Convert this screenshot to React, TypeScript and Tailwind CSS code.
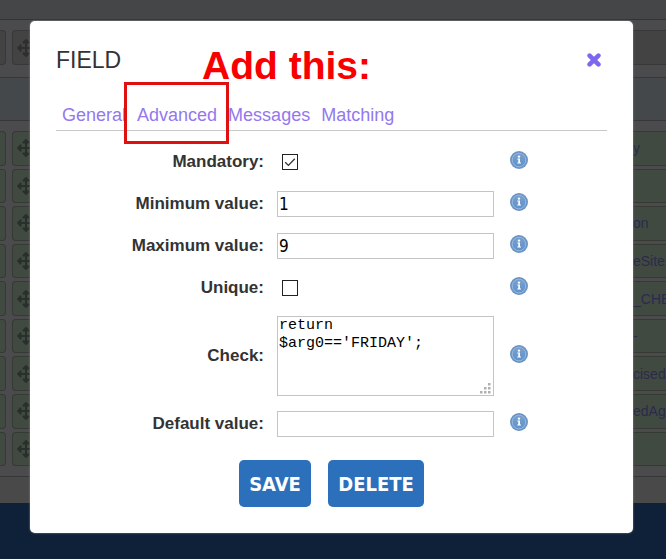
import type { ReactNode } from "react"
import { FaArrowsAlt } from "react-icons/fa"

const tabs = ["General", "Advanced", "Messages", "Matching"]

const attributes = ["y", "", "on", "eSites", "_CHE", "-", "cised", "edAge", ""]

function InfoIcon() {
  return (
    <svg viewBox="0 0 18 18" className="w-[18px] h-[18px]" aria-hidden="true">
      <defs>
        <linearGradient id="infoFill" x1="0" y1="0" x2="0" y2="1">
          <stop offset="0" stopColor="#7a9fca" />
          <stop offset="1" stopColor="#5c93d0" />
        </linearGradient>
      </defs>
      <circle cx="9" cy="9" r="9" fill="#6b94c4" />
      <circle cx="9" cy="9" r="6.8" fill="url(#infoFill)" stroke="#9bbbe0" strokeWidth="0.9" />
      <circle cx="9" cy="5.6" r="1.2" fill="#fff" />
      <path d="M7.3 7.5h2.7v4h1v1.1H7.3v-1.1h1V8.6h-1z" fill="#fff" />
    </svg>
  )
}

function FieldRow({ id, label, tall, children }: { id: string; label: string; tall?: boolean; children: ReactNode }) {
  return (
    <div className={`grid grid-cols-[208px_217px_18px] items-center ${tall ? "h-[94px]" : "h-[42px]"}`}>
      <label htmlFor={id} className="text-right text-[17px] leading-6 font-bold text-[#333]">
        {label}
      </label>
      <div className="ml-[13px] w-[217px]">{children}</div>
      <button type="button" aria-label={`Help for ${label}`} className="ml-[29px] mb-1 w-[18px] h-[18px]">
        <InfoIcon />
      </button>
    </div>
  )
}

function CheckBox({ id, checked }: { id: string; checked?: boolean }) {
  return (
    <div className="grid w-4 h-4 ml-[5px]">
      <input
        id={id}
        type="checkbox"
        defaultChecked={checked}
        className="peer col-start-1 row-start-1 appearance-none w-4 h-4 border border-[#222] bg-white"
      />
      <svg
        viewBox="0 0 16 16"
        className="col-start-1 row-start-1 w-4 h-4 pointer-events-none invisible peer-checked:visible"
      >
        <path d="M3.2 8.2l3.2 3.2 6.4-6.6" fill="none" stroke="#333" strokeWidth="1.3" />
      </svg>
    </div>
  )
}

const inputClass =
  "block w-full h-[26px] border border-[#c4c4c4] bg-white px-px text-[17px] text-black font-['DejaVu_Sans_Condensed','DejaVu_Sans',sans-serif]"

const buttonClass =
  "h-[47px] rounded-[5px] bg-[#2c6fba] text-xl font-bold text-white font-['DejaVu_Sans_Condensed','DejaVu_Sans',sans-serif]"

// Dimmed attribute list behind the dialog
function Backdrop() {
  return (
    <div className="flex flex-col min-h-screen bg-[#4b4a4c]" aria-hidden="true">
      <div className="h-5 bg-[#454648] border-b border-[#333]" />
      <div className="flex gap-[6px] mt-[10px] h-[35px]">
        <div className="w-[6px] rounded-r-[4px] border border-l-0 border-[#383838] bg-[#434343]" />
        <div className="flex-1 flex items-center pl-1 rounded-l-[4px] border border-r-0 border-[#383838] bg-[#434343] text-[#2c2e30]">
          <FaArrowsAlt size={18} />
        </div>
      </div>
      <div className="mt-3 h-11 border-y border-[#363738] bg-[#45484b]" />
      <div className="mt-[10px] flex flex-col gap-[3px] h-[335px]">
        {attributes.map((name, index) => (
          <div key={index} className="flex flex-1 gap-[6px]">
            <div className="w-[6px] rounded-r-[4px] border border-l-0 border-[#353a35] bg-[#414a40]" />
            <div className="flex-1 flex items-center justify-between pl-1 rounded-l-[4px] border border-r-0 border-[#353a35] bg-[#414a40] text-[#29302b]">
              <FaArrowsAlt size={18} />
              <span className="w-[33px] text-sm text-[#2b2a4c]">{name}</span>
            </div>
          </div>
        ))}
      </div>
      <div className="mt-[10px] h-[27px] border-t border-[#363638] bg-[#49494a]" />
      <div className="flex-1 bg-[#0e2139]" />
    </div>
  )
}

export default function App() {
  return (
    <div className="relative overflow-hidden font-['Liberation_Sans',Arial,sans-serif]">
      <Backdrop />

      <div className="absolute inset-x-0 top-0 pt-[21px] pl-[30px] pr-[33px]">
        <div
          role="dialog"
          aria-label="Field"
          className="relative rounded-[5px] bg-white px-[26px] pt-[22px] pb-[26px] shadow-[0_0_2px_0_#999]"
        >
          <div className="flex items-center justify-between h-[34px]">
            <h1 className="text-[23px] leading-7 text-[#333]">FIELD</h1>
            <button type="button" aria-label="Close" className="mr-[6px]">
              <svg viewBox="0 0 14 14" className="w-[14px] h-[14px]">
                <path d="M2.6 2.6l8.8 8.8M11.4 2.6l-8.8 8.8" stroke="#7b68ee" strokeWidth="4.6" strokeLinecap="round" />
              </svg>
            </button>
          </div>

          <nav className="mt-[22px] flex items-center gap-[11px] h-8 pl-[6px] border-b border-[#c8c8c8]">
            {tabs.map((tab) => (
              <a key={tab} href="#" className="text-lg leading-6 text-[#9378ee]">
                {tab}
              </a>
            ))}
          </nav>

          <form className="mt-[10px]">
            <FieldRow id="mandatory" label="Mandatory:">
              <CheckBox id="mandatory" checked />
            </FieldRow>
            <FieldRow id="min" label="Minimum value:">
              <input id="min" type="text" defaultValue="1" className={inputClass} />
            </FieldRow>
            <FieldRow id="max" label="Maximum value:">
              <input id="max" type="text" defaultValue="9" className={inputClass} />
            </FieldRow>
            <FieldRow id="unique" label="Unique:">
              <CheckBox id="unique" />
            </FieldRow>
            <FieldRow id="check" label="Check:" tall>
              <div className="relative">
                <textarea
                  id="check"
                  defaultValue={"return\n$arg0=='FRIDAY';"}
                  className="block w-full h-20 resize-none border border-[#c4c4c4] bg-white px-px py-0 text-[15px] leading-[18px] text-black font-['Liberation_Mono','Courier_New',monospace]"
                />
                <svg viewBox="0 0 12 12" className="absolute right-[3px] bottom-[2px] w-3 h-3" fill="#b0b0b0">
                  <path d="M9 1h2.5v2.5H9zM9 5h2.5v2.5H9zM5 5h2.5v2.5H5zM9 9h2.5v2.5H9zM5 9h2.5v2.5H5zM1 9h2.5v2.5H1z" />
                </svg>
              </div>
            </FieldRow>
            <FieldRow id="default" label="Default value:">
              <input id="default" type="text" className={inputClass} />
            </FieldRow>

            <div className="mt-[15px] flex justify-center gap-[17px]">
              <button type="button" className={`${buttonClass} w-[72px]`}>
                SAVE
              </button>
              <button type="button" className={`${buttonClass} w-24`}>
                DELETE
              </button>
            </div>
          </form>

          {/* Annotations drawn over the dialog */}
          <div className="absolute left-[94px] top-[61px] w-[105px] h-[62px] border-3 border-[#e01010] pointer-events-none" />
          <div className="absolute left-[172px] top-[22px] text-[39px] leading-[46px] font-bold text-[#f80000] whitespace-nowrap pointer-events-none">
            Add this:
          </div>
        </div>
      </div>
    </div>
  )
}
